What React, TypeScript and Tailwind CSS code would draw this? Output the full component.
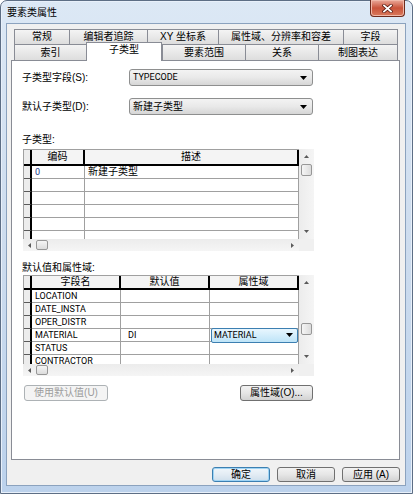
import React from "react";

const row1 = [
  { label: "常规", w: "w-[55px]" },
  { label: "编辑者追踪", w: "w-[78px]" },
  { label: "XY 坐标系", w: "w-[71px]" },
  { label: "属性域、分辨率和容差", w: "w-[125px]" },
  { label: "字段", w: "w-[55px]" },
];

const row2 = [
  { label: "索引", w: "w-[72px]", active: false },
  { label: "子类型", w: "w-[76px]", active: true },
  { label: "要素范围", w: "w-[83px]", active: false },
  { label: "关系", w: "w-[73px]", active: false },
  { label: "制图表达", w: "w-[80px]", active: false },
];

const fields = ["LOCATION", "DATE_INSTA", "OPER_DISTR", "MATERIAL", "STATUS", "CONTRACTOR"];

// small latin text in the grids and combos
const latin = "font-['Roboto',sans-serif] text-[9px] leading-none";

function TriDown() {
  return (
    <svg width="7" height="4" viewBox="0 0 7 4">
      <polygon points="0,0 7,0 3.5,4" fill="#000" />
    </svg>
  );
}

function Arrow({ dir }: { dir: "up" | "down" | "left" | "right" }) {
  const pts = {
    up: "0,3 5,3 2.5,0",
    down: "0,0 5,0 2.5,3",
    left: "3,0 3,5 0,2.5",
    right: "0,0 0,5 3,2.5",
  }[dir];
  const size = dir === "up" || dir === "down" ? { w: 5, h: 3 } : { w: 3, h: 5 };
  return (
    <svg width={size.w} height={size.h} viewBox={`0 0 ${size.w} ${size.h}`}>
      <polygon points={pts} fill="#5a5a5a" />
    </svg>
  );
}

function Combo({ text, cjk }: { text: string; cjk?: boolean }) {
  return (
    <div className="flex h-[17px] w-[184px] items-center rounded-[3px] border border-[#8e8f8f] bg-linear-to-b from-[#f3f3f3] via-[#e9e9e9] to-[#d6d6d6] pl-[3px] pr-[5px]">
      <span className={cjk ? "flex-1 text-[10px] leading-none" : `flex-1 ${latin}`}>{text}</span>
      <TriDown />
    </div>
  );
}

function VScroll({ thumb }: { thumb: string }) {
  return (
    <div className="flex w-[15px] flex-col bg-linear-to-r from-[#ececec] to-[#f5f5f5]">
      <div className="flex h-[15px] items-center justify-center">
        <Arrow dir="up" />
      </div>
      <div className={`${thumb} mx-[2px] h-[12px] rounded-[2px] border border-[#979797] bg-linear-to-r from-[#f5f5f5] to-[#dcdcdc]`} />
      <div className="flex-1" />
      <div className="flex h-[15px] items-center justify-center">
        <Arrow dir="down" />
      </div>
    </div>
  );
}

function HScroll() {
  return (
    <div className="flex h-[12px] w-[291px]">
      <div className="flex w-[276px] items-center bg-linear-to-b from-[#ececec] to-[#f5f5f5]">
        <div className="flex w-[13px] items-center justify-center">
          <Arrow dir="left" />
        </div>
        <div className="h-[10px] w-[12px] rounded-[2px] border border-[#979797] bg-linear-to-b from-[#f5f5f5] to-[#dcdcdc]" />
        <div className="flex-1" />
        <div className="flex w-[13px] items-center justify-center">
          <Arrow dir="right" />
        </div>
      </div>
      <div className="w-[15px] bg-[#f0f0f0]" />
    </div>
  );
}

function RowHead() {
  return <div className="h-[13px] w-[8px] shrink-0 border-r-2 border-b border-r-black border-b-[#5a5a5a] bg-[#ececec]" />;
}

function SubtypeGrid() {
  return (
    <div className="ml-[11px] mt-[3px] flex w-[291px] flex-col">
      <div className="flex h-[90px]">
        <div className="flex w-[276px] flex-col overflow-hidden border-t border-l border-[#a0a0a0] bg-[#ababab]">
          <div className="flex h-[16px] shrink-0 border-b-2 border-black bg-[#f4f4f4]">
            <div className="w-[8px] shrink-0 border-r-2 border-black bg-[#ececec]" />
            <div className="flex w-[53px] shrink-0 items-center justify-center border-r-2 border-black text-[10px] leading-none">编码</div>
            <div className="flex flex-1 items-center justify-center border-r-2 border-black text-[10px] leading-none">描述</div>
          </div>
          {[0, 1, 2, 3, 4, 5].map((i) => (
            <div key={i} className="flex h-[13px] shrink-0">
              <RowHead />
              <div className={`flex w-[53px] shrink-0 items-center border-r border-b border-[#a0a0a0] bg-white pl-[3px] text-[#1b3a8a] ${latin}`}>
                {i === 0 ? "0" : ""}
              </div>
              <div className="flex flex-1 items-center border-r border-b border-[#a0a0a0] bg-white pl-[3px] text-[10px] leading-none">
                {i === 0 ? "新建子类型" : ""}
              </div>
            </div>
          ))}
        </div>
        <VScroll thumb="mt-0" />
      </div>
      <HScroll />
    </div>
  );
}

function DomainGrid() {
  return (
    <div className="ml-[11px] mt-[1px] flex w-[291px] flex-col">
      <div className="flex h-[89px]">
        <div className="flex w-[276px] flex-col overflow-hidden border-t border-l border-[#a0a0a0] bg-[#ababab]">
          <div className="flex h-[14px] shrink-0 border-b-2 border-black bg-[#f4f4f4]">
            <div className="w-[8px] shrink-0 border-r-2 border-black bg-[#ececec]" />
            <div className="flex w-[89px] shrink-0 items-center justify-center border-r-2 border-black text-[10px] leading-none">字段名</div>
            <div className="flex w-[89px] shrink-0 items-center justify-center border-r-2 border-black text-[10px] leading-none">默认值</div>
            <div className="flex flex-1 items-center justify-center border-r-2 border-black text-[10px] leading-none">属性域</div>
          </div>
          {fields.map((f) => (
            <div key={f} className="flex h-[13px] shrink-0">
              <RowHead />
              <div className={`flex w-[89px] shrink-0 items-center border-r border-b border-[#a0a0a0] bg-white pl-[3px] ${latin}`}>
                {f}
              </div>
              <div className={`flex w-[89px] shrink-0 items-center border-r border-b border-[#a0a0a0] bg-white pl-[7px] ${latin}`}>
                {f === "MATERIAL" ? "DI" : ""}
              </div>
              <div className={`flex flex-1 items-center border-r border-b border-[#a0a0a0] bg-white ${latin}`}>
                {f === "MATERIAL" ? (
                  <div className="relative z-10 -my-[2px] ml-px flex h-[15px] flex-1 items-center rounded-[2px] border border-[#3c7fb1] bg-linear-to-b from-[#e8f6fe] to-[#bee4f8] pl-[2px] pr-[4px]">
                    <span className="flex-1">MATERIAL</span>
                    <TriDown />
                  </div>
                ) : null}
              </div>
            </div>
          ))}
        </div>
        <VScroll thumb="mt-[33px]" />
      </div>
      <HScroll />
    </div>
  );
}

function WinButton({ children, cls }: { children: React.ReactNode; cls: string }) {
  return (
    <div className={`flex items-center justify-center rounded-[3px] border text-[10px] leading-none ${cls}`}>{children}</div>
  );
}

export default function App() {
  return (
    <div className="flex h-[494px] w-[413px] flex-col rounded-t-[7px] border border-[#5d6e85] bg-linear-to-b from-[#dce8f5] via-[#cddcee] to-[#bcd2ec] font-['Liberation_Sans','Noto_Sans_CJK_SC',sans-serif] text-black shadow-[inset_0_0_0_1px_#e8f0fa]">
      <div className="flex h-[22px] shrink-0 items-start justify-between">
        <div className="pl-[6px] pt-[7px] text-[10px] leading-none">要素类属性</div>
        <div className="-mt-px mr-[7px] flex h-[17px] w-[35px] items-center justify-center rounded-b-[4px] border border-t-0 border-[#6e2a1c] bg-linear-to-b from-[#e9a99a] via-[#c9533a] to-[#d9795c] shadow-[inset_0_0_0_1px_#f0b8a8]">
          <svg width="11" height="9" viewBox="0 0 11 9">
            <path d="M2 1.5 L9 7.5 M9 1.5 L2 7.5" stroke="#5a1a10" strokeWidth="3.4" strokeLinecap="square" />
            <path d="M2 1.5 L9 7.5 M9 1.5 L2 7.5" stroke="#ffffff" strokeWidth="1.8" strokeLinecap="square" />
          </svg>
        </div>
      </div>

      <div className="ml-[5px] flex h-[463px] w-[400px] flex-col border border-[#8ba2be] bg-[#f0f0f0]">
        <div className="ml-[7px] mt-[5px] flex h-[15px] w-[384px]">
          {row1.map((t) => (
            <div
              key={t.label}
              className={`${t.w} flex items-center justify-center border-t border-l border-[#898c95] bg-linear-to-b from-[#f4f4f4] to-[#dddddd] text-[10px] leading-none last:border-r`}
            >
              {t.label}
            </div>
          ))}
        </div>
        <div className="ml-[7px] flex h-[16px] w-[384px] items-end">
          {row2.map((t) =>
            t.active ? (
              <div
                key={t.label}
                className={`${t.w} relative z-10 -mb-px flex h-[19px] justify-center border-t border-r border-l border-[#898c95] bg-white pt-[2px] text-[10px] leading-none`}
              >
                {t.label}
              </div>
            ) : (
              <div
                key={t.label}
                className={`${t.w} flex h-[16px] items-center justify-center border-t border-l border-[#898c95] bg-linear-to-b from-[#f4f4f4] to-[#dddddd] text-[10px] leading-none last:border-r`}
              >
                {t.label}
              </div>
            )
          )}
        </div>

        <div className="ml-[4px] flex h-[400px] w-[389px] flex-col border border-[#898c95] bg-white">
          <div className="mt-[8px] flex items-center">
            <div className="ml-[10px] w-[107px] text-[10px] leading-none">子类型字段(S):</div>
            <Combo text="TYPECODE" />
          </div>
          <div className="mt-[12px] flex items-center">
            <div className="ml-[10px] w-[107px] text-[10px] leading-none">默认子类型(D):</div>
            <Combo text="新建子类型" cjk />
          </div>

          <div className="ml-[10px] mt-[19px] h-[12px] text-[10px] leading-[12px]">子类型:</div>
          <SubtypeGrid />

          <div className="ml-[10px] mt-[11px] h-[12px] text-[10px] leading-[12px]">默认值和属性域:</div>
          <DomainGrid />

          <div className="mt-[9px] flex h-[16px]">
            <WinButton cls="ml-[12px] w-[84px] border-[#adb2b5] bg-[#f4f4f4] text-[#9c9c9c]">使用默认值(U)</WinButton>
            <WinButton cls="ml-[132px] w-[73px] border-[#707070] bg-linear-to-b from-[#f2f2f2] via-[#e6e6e6] to-[#d2d2d2]">属性域(O)...</WinButton>
          </div>
        </div>

        <div className="mr-[5px] mt-[7px] flex h-[15px] justify-end gap-[7px]">
          <WinButton cls="w-[58px] border-[#3c7fb1] bg-linear-to-b from-[#f0f6fb] via-[#e3ecf4] to-[#cfdfec] shadow-[inset_0_0_0_1px_#9fd4f4]">确定</WinButton>
          <WinButton cls="w-[58px] border-[#707070] bg-linear-to-b from-[#f2f2f2] via-[#e6e6e6] to-[#d2d2d2]">取消</WinButton>
          <WinButton cls="w-[58px] border-[#707070] bg-linear-to-b from-[#f2f2f2] via-[#e6e6e6] to-[#d2d2d2]">应用 (A)</WinButton>
        </div>
      </div>
    </div>
  );
}
